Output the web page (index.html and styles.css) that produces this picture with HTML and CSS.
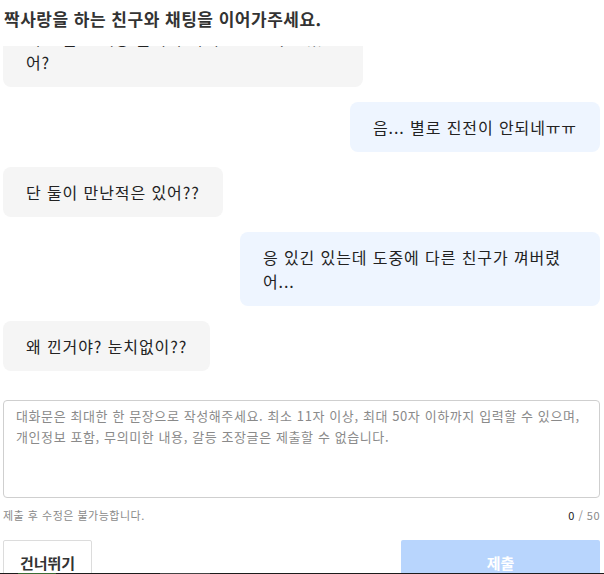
FILE: index.html
```html
<!DOCTYPE html>
<html lang="ko">
<head>
<meta charset="utf-8">
<title>채팅 이어가기</title>
<link rel="stylesheet" href="styles.css">
</head>
<body>
<div class="page">
  <h1 class="title">짝사랑을 하는 친구와 채팅을 이어가주세요.</h1>
  <div class="chat">
    <div class="bubble left">너 요즘 그애랑 둘이서 어때? 만난 적은 있어?</div>
    <div class="bubble right">음... 별로 진전이 안되네ㅠㅠ</div>
    <div class="bubble left">단 둘이 만난적은 있어??</div>
    <div class="bubble right">응 있긴 있는데 도중에 다른 친구가 껴버렸어...</div>
    <div class="bubble left">왜 낀거야? 눈치없이??</div>
  </div>
  <textarea class="input" placeholder="대화문은 최대한 한 문장으로 작성해주세요. 최소 11자 이상, 최대 50자 이하까지 입력할 수 있으며, 개인정보 포함, 무의미한 내용, 갈등 조장글은 제출할 수 없습니다."></textarea>
  <div class="helper">
    <span class="note">제출 후 수정은 불가능합니다.</span>
    <span class="count"><b>0</b> / 50</span>
  </div>
  <div class="actions">
    <button class="btn skip">건너뛰기</button>
    <button class="btn submit">제출</button>
  </div>
</div>
<div class="edge"><span class="seg green"></span><span class="seg grey"></span></div>
</body>
</html>
```

FILE: styles.css
```css
html, body {
  margin: 0;
  padding: 0;
  height: 574px;
  overflow: hidden;
  background: #fff;
}
body {
  font-family: "Noto Sans CJK KR", "Noto Sans", sans-serif;
  color: #222;
}
.page {
  padding: 0 4px 0 3px;
  display: flex;
  flex-direction: column;
}
.title {
  margin: 0 0 8px 1px;
  font-size: 17px;
  line-height: 38px;
  font-weight: 700;
  letter-spacing: 0.5px;
  color: #333;
}
.chat {
  height: 325px;
  padding-bottom: 15px;
  overflow: hidden;
  display: flex;
  flex-direction: column;
  justify-content: flex-end;
  gap: 15px;
}
.bubble {
  flex-shrink: 0;
  box-sizing: border-box;
  max-width: 360px;
  min-height: 50px;
  padding: 13px 23px;
  font-size: 16px;
  line-height: 24px;
  letter-spacing: 0.9px;
  border-radius: 8px;
  color: #222;
}
.bubble.left {
  align-self: flex-start;
  background: #f5f5f5;
}
.bubble.right {
  align-self: flex-end;
  background: #eef5ff;
}
.input {
  margin-top: 14px;
  box-sizing: border-box;
  width: 100%;
  height: 98px;
  padding: 4px 12px;
  border: 1px solid #cfcfcf;
  border-radius: 4px;
  resize: none;
  font-family: inherit;
  font-size: 13px;
  line-height: 21px;
  letter-spacing: 0.6px;
  color: #333;
  display: block;
}
.input::placeholder {
  color: #8a8a8a;
}
.helper {
  margin-top: 9px;
  display: flex;
  justify-content: space-between;
  font-size: 11px;
  line-height: 16px;
  letter-spacing: 0.5px;
  color: #8a8a8a;
}
.count b {
  font-weight: 400;
  color: #222;
}
.actions {
  margin-top: 17px;
  display: flex;
  justify-content: space-between;
}
.btn {
  height: 44px;
  font-family: inherit;
  font-size: 15px;
  font-weight: 700;
  border-radius: 2px;
  cursor: pointer;
}
.skip {
  width: 89px;
  background: #fff;
  border: 1px solid #dcdcdc;
  color: #333;
}
.submit {
  width: 199px;
  background: #b8d5fd;
  border: none;
  color: #fff;
}
.edge {
  position: fixed;
  left: 0;
  right: 0;
  bottom: 0;
  height: 1px;
  background: #1c1c1c;
}
.seg {
  position: absolute;
  top: 0;
  height: 1px;
}
.seg.green {
  left: 18px;
  width: 38px;
  background: #3a6b35;
}
.seg.grey {
  left: 160px;
  width: 50px;
  background: #444;
}
```
